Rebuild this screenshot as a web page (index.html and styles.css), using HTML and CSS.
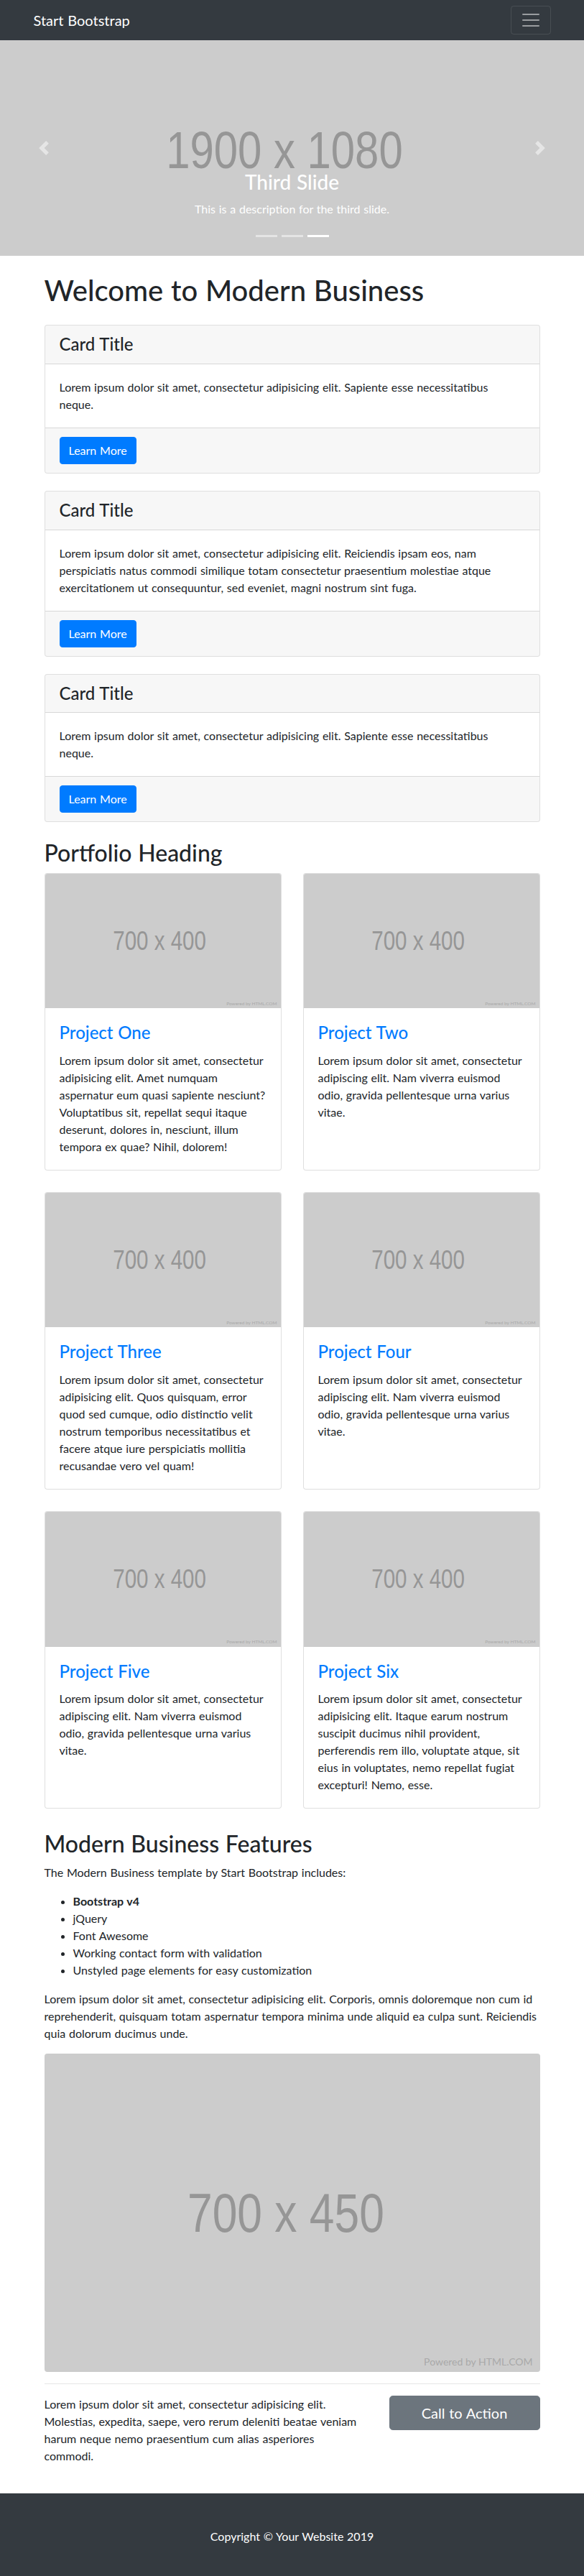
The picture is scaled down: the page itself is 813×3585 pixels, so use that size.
FILE: index.html
```html
<!DOCTYPE html>
<html lang="en">
<head>
<meta charset="utf-8">
<title>Modern Business - Start Bootstrap Template</title>
<link rel="stylesheet" href="styles.css">
</head>
<body>
<nav class="navbar">
  <div class="navbar-inner">
    <a class="brand" href="#">Start Bootstrap</a>
    <button class="toggler" type="button" aria-label="Toggle navigation">
      <svg class="toggler-icon" viewBox="0 0 30 30" width="30" height="30"><path d="M4 7h22M4 15h22M4 23h22" stroke="rgba(255,255,255,0.5)" stroke-width="2" stroke-linecap="round" stroke-miterlimit="10"/></svg>
    </button>
  </div>
</nav>

<header class="carousel">
  <div class="ph ph-hero"><span class="ph-label">1900 x 1080</span></div>
  <div class="caption">
    <h3>Third Slide</h3>
    <p>This is a description for the third slide.</p>
  </div>
  <ol class="indicators"><li></li><li></li><li class="active"></li></ol>
  <a class="ctl ctl-prev" href="#"><svg viewBox="0 0 8 8" width="20" height="20"><path fill="#fff" d="M5.25 0l-4 4 4 4 1.5-1.5L4.25 4l2.5-2.5L5.25 0z"/></svg></a>
  <a class="ctl ctl-next" href="#"><svg viewBox="0 0 8 8" width="20" height="20"><path fill="#fff" d="M2.75 0l-1.5 1.5L3.75 4l-2.5 2.5L2.75 8l4-4-4-4z"/></svg></a>
</header>

<main class="container">
  <h1 class="page-title">Welcome to Modern Business</h1>

  <section class="card-stack">
    <div class="card">
      <h4 class="card-header">Card Title</h4>
      <div class="card-body"><p>Lorem ipsum dolor sit amet, consectetur adipisicing elit. Sapiente esse necessitatibus neque.</p></div>
      <div class="card-footer"><a href="#" class="btn btn-primary">Learn More</a></div>
    </div>
    <div class="card">
      <h4 class="card-header">Card Title</h4>
      <div class="card-body"><p>Lorem ipsum dolor sit amet, consectetur adipisicing elit. Reiciendis ipsam eos, nam perspiciatis natus commodi similique totam consectetur praesentium molestiae atque exercitationem ut consequuntur, sed eveniet, magni nostrum sint fuga.</p></div>
      <div class="card-footer"><a href="#" class="btn btn-primary">Learn More</a></div>
    </div>
    <div class="card">
      <h4 class="card-header">Card Title</h4>
      <div class="card-body"><p>Lorem ipsum dolor sit amet, consectetur adipisicing elit. Sapiente esse necessitatibus neque.</p></div>
      <div class="card-footer"><a href="#" class="btn btn-primary">Learn More</a></div>
    </div>
  </section>

  <h2>Portfolio Heading</h2>

  <section class="portfolio">
    <div class="card">
      <div class="ph ph-card"><span class="ph-label">700 x 400</span><span class="ph-credit">Powered by HTML.COM</span></div>
      <div class="card-body">
        <h4 class="card-title"><a href="#">Project One</a></h4>
        <p>Lorem ipsum dolor sit amet, consectetur adipisicing elit. Amet numquam aspernatur eum quasi sapiente nesciunt? Voluptatibus sit, repellat sequi itaque deserunt, dolores in, nesciunt, illum tempora ex quae? Nihil, dolorem!</p>
      </div>
    </div>
    <div class="card">
      <div class="ph ph-card"><span class="ph-label">700 x 400</span><span class="ph-credit">Powered by HTML.COM</span></div>
      <div class="card-body">
        <h4 class="card-title"><a href="#">Project Two</a></h4>
        <p>Lorem ipsum dolor sit amet, consectetur adipiscing elit. Nam viverra euismod odio, gravida pellentesque urna varius vitae.</p>
      </div>
    </div>
    <div class="card">
      <div class="ph ph-card"><span class="ph-label">700 x 400</span><span class="ph-credit">Powered by HTML.COM</span></div>
      <div class="card-body">
        <h4 class="card-title"><a href="#">Project Three</a></h4>
        <p>Lorem ipsum dolor sit amet, consectetur adipisicing elit. Quos quisquam, error quod sed cumque, odio distinctio velit nostrum temporibus necessitatibus et facere atque iure perspiciatis mollitia recusandae vero vel quam!</p>
      </div>
    </div>
    <div class="card">
      <div class="ph ph-card"><span class="ph-label">700 x 400</span><span class="ph-credit">Powered by HTML.COM</span></div>
      <div class="card-body">
        <h4 class="card-title"><a href="#">Project Four</a></h4>
        <p>Lorem ipsum dolor sit amet, consectetur adipiscing elit. Nam viverra euismod odio, gravida pellentesque urna varius vitae.</p>
      </div>
    </div>
    <div class="card">
      <div class="ph ph-card"><span class="ph-label">700 x 400</span><span class="ph-credit">Powered by HTML.COM</span></div>
      <div class="card-body">
        <h4 class="card-title"><a href="#">Project Five</a></h4>
        <p>Lorem ipsum dolor sit amet, consectetur adipiscing elit. Nam viverra euismod odio, gravida pellentesque urna varius vitae.</p>
      </div>
    </div>
    <div class="card">
      <div class="ph ph-card"><span class="ph-label">700 x 400</span><span class="ph-credit">Powered by HTML.COM</span></div>
      <div class="card-body">
        <h4 class="card-title"><a href="#">Project Six</a></h4>
        <p>Lorem ipsum dolor sit amet, consectetur adipisicing elit. Itaque earum nostrum suscipit ducimus nihil provident, perferendis rem illo, voluptate atque, sit eius in voluptates, nemo repellat fugiat excepturi! Nemo, esse.</p>
      </div>
    </div>
  </section>

  <section class="features">
    <h2>Modern Business Features</h2>
    <p>The Modern Business template by Start Bootstrap includes:</p>
    <ul>
      <li><strong>Bootstrap v4</strong></li>
      <li>jQuery</li>
      <li>Font Awesome</li>
      <li>Working contact form with validation</li>
      <li>Unstyled page elements for easy customization</li>
    </ul>
    <p>Lorem ipsum dolor sit amet, consectetur adipisicing elit. Corporis, omnis doloremque non cum id reprehenderit, quisquam totam aspernatur tempora minima unde aliquid ea culpa sunt. Reiciendis quia dolorum ducimus unde.</p>
    <div class="ph ph-wide"><span class="ph-label">700 x 450</span><span class="ph-credit">Powered by HTML.COM</span></div>
  </section>

  <hr class="divider">

  <section class="cta">
    <p>Lorem ipsum dolor sit amet, consectetur adipisicing elit. Molestias, expedita, saepe, vero rerum deleniti beatae veniam harum neque nemo praesentium cum alias asperiores commodi.</p>
    <a class="btn btn-lg btn-secondary" href="#">Call to Action</a>
  </section>
</main>

<footer class="footer">
  <p>Copyright &copy; Your Website 2019</p>
</footer>
</body>
</html>
```
FILE: styles.css
```css
*, *::before, *::after { box-sizing: border-box; }

body {
  margin: 0;
  font-family: Lato, "Liberation Sans", sans-serif;
  font-size: 16px;
  line-height: 1.5;
  word-spacing: 0.65px;
  color: #212529;
  background: #fff;
}

h1, h2, h3, h4 { margin: 0 0 8px; font-weight: 500; line-height: 1.2; }
h1 { font-size: 40px; }
h2 { font-size: 32px; }
h3 { font-size: 28px; }
h4 { font-size: 24px; }
p { margin: 0 0 16px; }
a { color: #007bff; text-decoration: none; }

/* navbar */
.navbar {
  background: #343a40;
  padding: 8px 16px;
}
.navbar-inner {
  max-width: 720px;
  margin: 0 auto;
  display: flex;
  align-items: center;
  justify-content: space-between;
}
.brand {
  color: #fff;
  font-size: 20px;
  line-height: 30px;
  padding: 5px 0;
}
.toggler {
  display: flex;
  padding: 4px 12px;
  background: transparent;
  border: 1px solid rgba(255, 255, 255, 0.1);
  border-radius: 4px;
  line-height: 1;
}
.toggler-icon { display: block; }

/* carousel */
.carousel {
  position: relative;
  height: 300px;
  overflow: hidden;
}
.ph {
  position: relative;
  display: flex;
  align-items: center;
  justify-content: center;
  padding-right: 2.5%;
  background: #cccccc;
  color: #969696;
  overflow: hidden;
  word-spacing: 0;
}
.ph-label {
  display: inline-block;
  font-family: "Liberation Sans", Arial, sans-serif;
  line-height: 0.7;
  transform: scaleX(0.82);
  white-space: nowrap;
}
.ph-credit {
  position: absolute;
  right: 5px;
  bottom: 3px;
  font-size: 6.5px;
  line-height: 1;
  color: #a9a9a9;
  white-space: nowrap;
}
.ph-hero {
  height: 300px;
  padding-top: 6px;
}
.ph-hero .ph-label { font-size: 73px; }

.caption {
  position: absolute;
  left: 15%;
  right: 15%;
  bottom: 20px;
  padding: 20px 0 17px;
  text-align: center;
  color: #fff;
}
.caption h3 { margin-bottom: 8px; }
.caption p { margin-bottom: 16px; }

.indicators {
  position: absolute;
  left: 0;
  right: 0;
  bottom: 0;
  display: flex;
  justify-content: center;
  margin: 0 15% 16px;
  padding: 0;
  list-style: none;
}
.indicators li {
  box-sizing: content-box;
  width: 30px;
  height: 3px;
  margin: 0 3px;
  background: #fff;
  background-clip: padding-box;
  border-top: 10px solid transparent;
  border-bottom: 10px solid transparent;
  opacity: 0.5;
}
.indicators li.active { opacity: 1; }

.ctl {
  position: absolute;
  top: 0;
  bottom: 0;
  width: 15%;
  display: flex;
  align-items: center;
  justify-content: center;
  opacity: 0.5;
}
.ctl-prev { left: 0; }
.ctl-next { right: 0; }

/* main */
.container {
  max-width: 720px;
  margin: 0 auto;
  padding: 0 15px;
}
.page-title { margin: 24px 0; }

.card {
  display: flex;
  flex-direction: column;
  background: #fff;
  border: 1px solid rgba(0, 0, 0, 0.125);
  border-radius: 4px;
  overflow: hidden;
}
.card-header {
  margin: 0;
  padding: 12px 20px;
  background: rgba(0, 0, 0, 0.03);
  border-bottom: 1px solid rgba(0, 0, 0, 0.125);
}
.card-body {
  flex: 1 1 auto;
  padding: 20px;
}
.card-body p { margin: 0; }
.card-footer {
  padding: 12px 20px;
  background: rgba(0, 0, 0, 0.03);
  border-top: 1px solid rgba(0, 0, 0, 0.125);
}
.card-title { margin: 0 0 12px; }

.btn {
  display: inline-block;
  padding: 6px 12px;
  font-size: 16px;
  line-height: 1.5;
  text-align: center;
  border: 1px solid transparent;
  border-radius: 4px;
}
.btn-primary { color: #fff; background: #007bff; border-color: #007bff; }
.btn-lg { padding: 8px 16px; font-size: 20px; border-radius: 4.8px; }
.btn-secondary { color: #fff; background: #6c757d; border-color: #6c757d; }

.card-stack {
  display: flex;
  flex-direction: column;
  gap: 24px;
  margin-bottom: 24px;
}

.portfolio {
  display: grid;
  grid-template-columns: 1fr 1fr;
  gap: 30px;
  margin: 0 0 30px;
}
.ph-card { aspect-ratio: 7 / 4; }
.ph-card .ph-label { font-size: 36px; }

.features ul { margin: 0 0 16px; padding-left: 40px; }
.ph-wide {
  aspect-ratio: 700 / 450;
  border-radius: 4px;
}
.ph-wide .ph-label { font-size: 76px; }
.ph-wide .ph-credit {
  right: 10px;
  bottom: 7px;
  font-size: 14px;
}

.divider {
  height: 0;
  margin: 16px 0;
  border: 0;
  border-top: 1px solid rgba(0, 0, 0, 0.1);
}

.cta {
  display: grid;
  grid-template-columns: 1fr 210px;
  column-gap: 30px;
  align-items: start;
  margin-bottom: 24px;
}
.cta p { padding-right: 10px; }

.footer {
  background: #343a40;
  padding: 48px 0;
  text-align: center;
  color: #fff;
}
.footer p { margin: 0; }
```
